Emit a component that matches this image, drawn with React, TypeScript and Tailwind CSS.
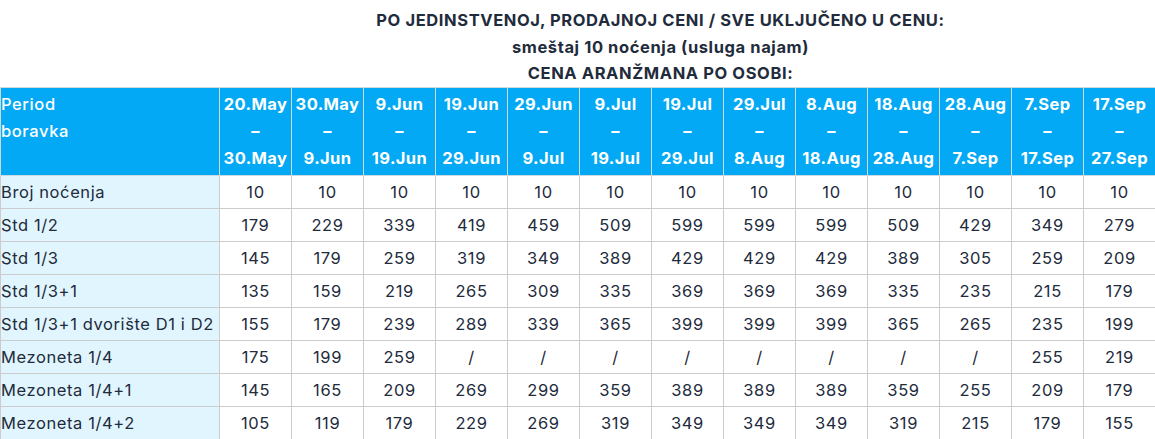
import React from "react";

const periods: [string, string][] = [
  ["20.May", "30.May"],
  ["30.May", "9.Jun"],
  ["9.Jun", "19.Jun"],
  ["19.Jun", "29.Jun"],
  ["29.Jun", "9.Jul"],
  ["9.Jul", "19.Jul"],
  ["19.Jul", "29.Jul"],
  ["29.Jul", "8.Aug"],
  ["8.Aug", "18.Aug"],
  ["18.Aug", "28.Aug"],
  ["28.Aug", "7.Sep"],
  ["7.Sep", "17.Sep"],
  ["17.Sep", "27.Sep"],
];

const rows: [string, string[]][] = [
  ["Broj noćenja", Array(13).fill("10")],
  ["Std 1/2", ["179", "229", "339", "419", "459", "509", "599", "599", "599", "509", "429", "349", "279"]],
  ["Std 1/3", ["145", "179", "259", "319", "349", "389", "429", "429", "429", "389", "305", "259", "209"]],
  ["Std 1/3+1", ["135", "159", "219", "265", "309", "335", "369", "369", "369", "335", "235", "215", "179"]],
  ["Std 1/3+1 dvorište D1 i D2", ["155", "179", "239", "289", "339", "365", "399", "399", "399", "365", "265", "235", "199"]],
  ["Mezoneta 1/4", ["175", "199", "259", "/", "/", "/", "/", "/", "/", "/", "/", "255", "219"]],
  ["Mezoneta 1/4+1", ["145", "165", "209", "269", "299", "359", "389", "389", "389", "359", "255", "209", "179"]],
  ["Mezoneta 1/4+2", ["105", "119", "179", "229", "269", "319", "349", "349", "349", "319", "215", "179", "155"]],
];

export default function App() {
  return (
    <div
      className="w-[1155px] bg-white text-[#222b3c] tracking-[0.6px]"
      style={{ fontFamily: "Inter, 'Noto Sans', sans-serif" }}
    >
      <div className="pt-[7px] pl-[166px] text-center text-[16.5px] font-bold leading-[26.7px]">
        <div>PO JEDINSTVENOJ, PRODAJNOJ CENI / SVE UKLJUČENO U CENU:</div>
        <div>smeštaj 10 noćenja (usluga najam)</div>
        <div>CENA ARANŽMANA PO OSOBI:</div>
      </div>
      <table className="w-[1155px] table-fixed border-collapse text-[16.5px]">
        <colgroup>
          <col className="w-[219px]" />
          {periods.map((_, i) => (
            <col key={i} className="w-[72px]" />
          ))}
        </colgroup>
        <thead>
          <tr className="bg-[#03a9f4] text-white">
            <th className="border border-[#cfd8dc] px-0 pt-[3px] pb-[3px] text-left align-top font-medium leading-[27px]">
              Period
              <br />
              boravka
            </th>
            {periods.map(([a, b], i) => (
              <th
                key={i}
                className="border border-[#cfd8dc] px-0 pt-[3px] pb-[3px] text-center align-top font-bold leading-[27px] whitespace-nowrap tracking-[0.4px]"
              >
                {a}
                <br />–<br />
                {b}
              </th>
            ))}
          </tr>
        </thead>
        <tbody>
          {rows.map(([label, vals], r) => (
            <tr key={r}>
              <td className="h-[33px] border border-[#cccccc] bg-[#e1f5fe] px-0 text-left align-middle leading-[20px] whitespace-nowrap">
                {label}
              </td>
              {vals.map((v, i) => (
                <td
                  key={i}
                  className="h-[33px] border border-[#cccccc] px-0 text-center align-middle leading-[20px]"
                >
                  {v}
                </td>
              ))}
            </tr>
          ))}
        </tbody>
      </table>
    </div>
  );
}
